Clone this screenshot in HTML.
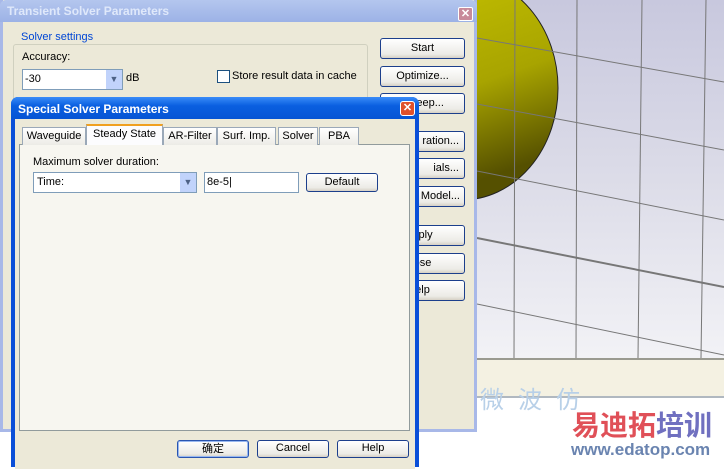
<!DOCTYPE html>
<html><head><meta charset="utf-8"><style>
*{margin:0;padding:0;box-sizing:border-box}
body{width:724px;height:461px;overflow:hidden;position:relative;background:#fff;font-family:Tahoma,"Liberation Sans","Noto Sans CJK SC",sans-serif;font-size:11px;color:#000}
.a{position:absolute}
.btn{position:absolute;border:1px solid #1c3f8c;border-radius:3px;background:linear-gradient(#fff,#ecebe6 80%,#d6d0c5);text-align:center;font-size:11px;line-height:18px}
.tab{position:absolute;top:127px;height:18px;border:1px solid #9aa8b8;border-bottom:none;background:linear-gradient(#fff,#ecebe6);line-height:16px;text-align:center;font-size:11px}
</style></head><body>
<div class="a" style="left:460px;top:0;width:264px;height:358px;background:linear-gradient(#c8c8de,#dcdce8 50%,#f2f2f6)"></div>
<svg class="a" style="left:0;top:0" width="724" height="461">
<defs><linearGradient id="g" x1="0" y1="0" x2="0.3" y2="1"><stop offset="0" stop-color="#c8c400"/><stop offset="0.6" stop-color="#a8a400"/><stop offset="1" stop-color="#555000"/></linearGradient></defs>
<ellipse cx="462" cy="88" rx="96" ry="112" fill="url(#g)" stroke="#222" stroke-width="1"/>
<g stroke="#777" stroke-width="1" fill="none">
<line x1="515" y1="0" x2="514" y2="358"/><line x1="577" y1="0" x2="576" y2="358"/>
<line x1="642" y1="0" x2="638" y2="358"/><line x1="706" y1="0" x2="701" y2="358"/>
<line x1="477" y1="38" x2="724" y2="82"/><line x1="477" y1="104" x2="724" y2="150"/>
<line x1="477" y1="171" x2="724" y2="220"/><line x1="477" y1="238" x2="724" y2="287" stroke-width="2"/>
<line x1="477" y1="304" x2="724" y2="355"/>
</g>
</svg>
<div class="a" style="left:477px;top:358px;width:247px;height:40px;background:#f4f1e2;border-top:2px solid #9a9a90;border-bottom:2px solid #b0b8c0"></div>
<div class="a" style="left:480px;top:380px;color:#b8d0e8;font-size:24px;letter-spacing:14px">微波仿</div>
<div class="a" style="left:572px;top:404px;color:#e05058;font-size:28px;font-weight:bold;font-family:'Noto Sans CJK SC',sans-serif;line-height:40px">易迪拓<span style="color:#7070c0">培训</span></div>
<div class="a" style="left:571px;top:440px;color:#6a84b0;font-size:17px;font-weight:bold">www.edatop.com</div>
<div class="a" style="left:0;top:0;width:477px;height:432px;background:#ece9d8;border:3px solid #a8b8e8;border-top:none"></div>
<div class="a" style="left:0;top:0;width:477px;height:22px;background:linear-gradient(#b4c6ee,#9cb2e6);border-radius:6px 6px 0 0"></div>
<div class="a" style="left:7px;top:4px;color:#dfe8fa;font-weight:bold;font-size:12px">Transient Solver Parameters</div>
<div class="a" style="left:458px;top:7px;width:15px;height:14px;background:#c88a9a;border:1px solid #fff;border-radius:2px;color:#fff;font-weight:bold;font-size:11px;line-height:12px;text-align:center">✕</div>
<div class="a" style="left:13px;top:44px;width:355px;height:60px;border:1px solid #d0d0bf;border-radius:3px"></div>
<div class="a" style="left:19px;top:31px;background:#ece9d8;padding:0 2px;color:#0046d5">Solver settings</div>
<div class="a" style="left:22px;top:51px">Accuracy:</div>
<div class="a" style="left:22px;top:69px;width:101px;height:21px;border:1px solid #7f9db9;background:#fff;padding:3px 2px">-30</div>
<div class="a" style="left:106px;top:70px;width:16px;height:19px;background:#c1d3fb;color:#4d6185;text-align:center;line-height:19px;font-size:9px">▼</div>
<div class="a" style="left:126px;top:72px">dB</div>
<div class="a" style="left:217px;top:70px;width:13px;height:13px;border:1px solid #1c5180;background:#fff"></div>
<div class="a" style="left:232px;top:70px">Store result data in cache</div>
<div class="btn" style="left:380px;top:38px;width:85px;height:21px">Start</div>
<div class="btn" style="left:380px;top:66px;width:85px;height:21px">Optimize...</div>
<div class="btn" style="left:380px;top:93px;width:85px;height:21px">Sweep...</div>
<div class="btn" style="left:380px;top:131px;width:85px;height:21px;text-align:right;padding-right:5px">ration...</div>
<div class="btn" style="left:380px;top:158px;width:85px;height:21px;text-align:right;padding-right:5px">ials...</div>
<div class="btn" style="left:380px;top:186px;width:85px;height:21px;text-align:right;padding-right:4px">Model...</div>
<div class="btn" style="left:380px;top:225px;width:85px;height:21px">pply</div>
<div class="btn" style="left:380px;top:253px;width:85px;height:21px">ose</div>
<div class="btn" style="left:380px;top:280px;width:85px;height:21px">elp</div>
<div class="a" style="left:11px;top:97px;width:408px;height:370px;background:#0a4fd8;border-radius:7px 7px 0 0"></div>
<div class="a" style="left:11px;top:97px;width:408px;height:22px;background:linear-gradient(#3a8cf8,#0a5fe0 40%,#0654d4);border-radius:7px 7px 0 0"></div>
<div class="a" style="left:18px;top:102px;color:#fff;font-weight:bold;font-size:12px">Special Solver Parameters</div>
<div class="a" style="left:400px;top:101px;width:15px;height:15px;background:#e0502a;border:1px solid #fff;border-radius:3px;color:#fff;font-weight:bold;font-size:11px;line-height:13px;text-align:center">✕</div>
<div class="a" style="left:15px;top:119px;width:400px;height:350px;background:#ece9d8"></div>
<div class="a" style="left:19px;top:144px;width:391px;height:287px;background:#f7f6f0;border:1px solid #919b9c"></div>
<div class="tab" style="left:22px;width:64px">Waveguide</div>
<div class="tab" style="left:86px;top:124px;height:21px;width:77px;background:#fcfcfe;border-top:2px solid #f0a020;line-height:16px">Steady State</div>
<div class="tab" style="left:163px;width:54px">AR-Filter</div>
<div class="tab" style="left:217px;width:59px">Surf. Imp.</div>
<div class="tab" style="left:278px;width:40px">Solver</div>
<div class="tab" style="left:319px;width:40px">PBA</div>
<div class="a" style="left:33px;top:156px">Maximum solver duration:</div>
<div class="a" style="left:33px;top:172px;width:164px;height:21px;border:1px solid #7f9db9;background:#fff;padding:3px 3px">Time:</div>
<div class="a" style="left:180px;top:173px;width:16px;height:19px;background:#c1d3fb;color:#4d6185;text-align:center;line-height:19px;font-size:9px">▼</div>
<div class="a" style="left:204px;top:172px;width:95px;height:21px;border:1px solid #7f9db9;background:#fff;padding:3px 2px">8e-5|</div>
<div class="btn" style="left:306px;top:173px;width:72px;height:19px;line-height:16px">Default</div>
<div class="btn" style="left:177px;top:440px;width:72px;height:18px;line-height:15px;border-color:#2a55b0;box-shadow:inset 0 0 0 1px #98b8f0;font-family:'Noto Sans CJK SC',sans-serif">确定</div>
<div class="btn" style="left:257px;top:440px;width:72px;height:18px;line-height:15px">Cancel</div>
<div class="btn" style="left:337px;top:440px;width:72px;height:18px;line-height:15px">Help</div>
</body></html>
